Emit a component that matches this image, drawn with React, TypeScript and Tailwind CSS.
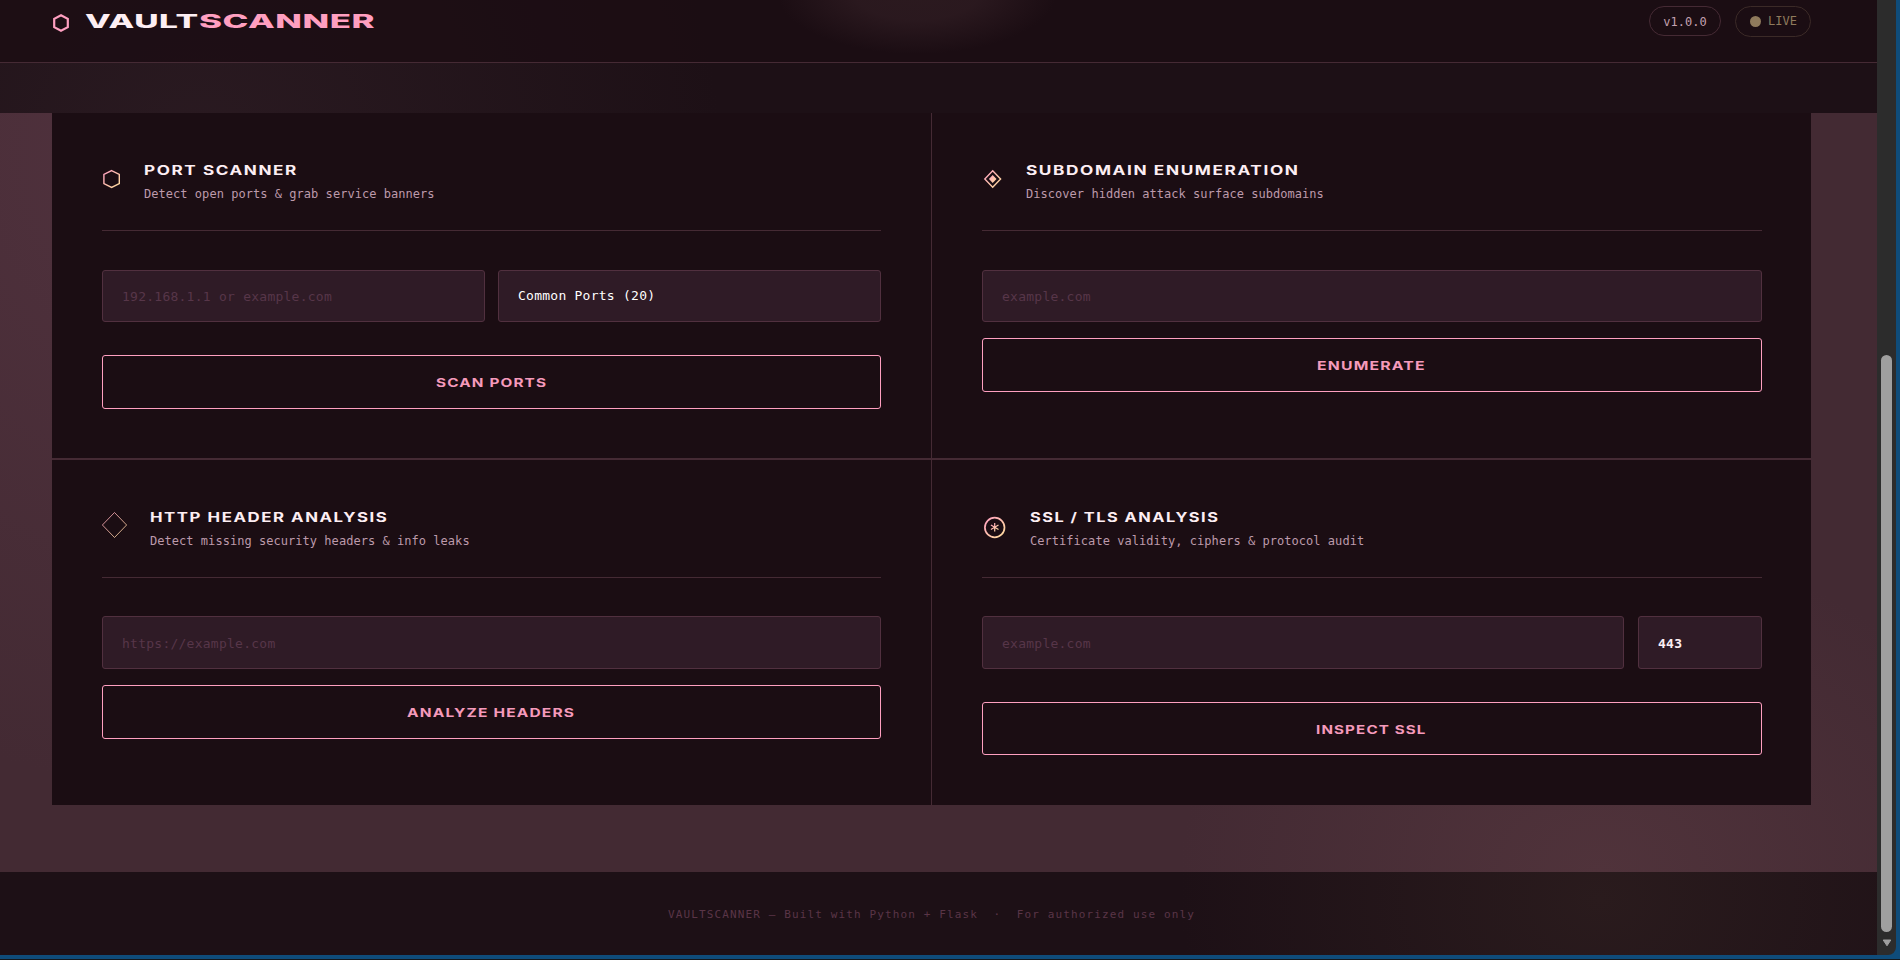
import { useLayoutEffect, useRef, useState } from 'react';

const MONO = "font-['DejaVu_Sans_Mono',monospace]";

// Wide display lettering: the glyphs are stretched until the line is `width` long
function Wide({ width, className = '', children }: { width: number; className?: string; children: React.ReactNode }) {
  const ref = useRef<HTMLSpanElement>(null);
  const [scale, setScale] = useState(1);

  useLayoutEffect(() => {
    if (ref.current) setScale(width / ref.current.offsetWidth);
  }, [width]);

  return (
    <span className="block text-left" style={{ width }}>
      <span
        ref={ref}
        className={`inline-block origin-left whitespace-nowrap font-['Inter',sans-serif] ${className}`}
        style={{ transform: `scaleX(${scale})` }}
      >
        {children}
      </span>
    </span>
  );
}

function Gradient({ id }: { id: string }) {
  return (
    <defs>
      <linearGradient id={id} x1="0" y1="0" x2="1" y2="1">
        <stop offset="0" stopColor="#ff9fc0" />
        <stop offset="0.9" stopColor="#ffd9a0" />
      </linearGradient>
    </defs>
  );
}

function HexIcon() {
  return (
    <svg width="19" height="20" viewBox="0 0 19 20" fill="none" className="mt-2">
      <Gradient id="hex" />
      <path d="M9.6 1.6 17.3 5.4v9.2L9.6 18.4 1.9 14.6V5.4Z" stroke="url(#hex)" strokeWidth="1.4" />
    </svg>
  );
}

function TargetIcon() {
  return (
    <svg width="20" height="20" viewBox="0 0 20 20" fill="none" className="mt-2">
      <Gradient id="target" />
      <path d="M10.7 1.8 18.6 10l-7.9 8.2L2.8 10Z" stroke="url(#target)" strokeWidth="1.4" />
      <path d="M10.7 6 14.5 10l-3.8 4L6.9 10Z" fill="url(#target)" />
    </svg>
  );
}

function DiamondIcon() {
  return (
    <svg width="26" height="28" viewBox="0 0 26 28" fill="none" className="mt-[3px]">
      <Gradient id="diamond" />
      <path d="M12.5 1.5 24.6 14 12.5 26.5.4 14Z" stroke="url(#diamond)" strokeWidth="1" opacity="0.8" />
    </svg>
  );
}

function AsteriskIcon() {
  return (
    <svg width="26" height="24" viewBox="0 0 26 24" fill="none" className="mt-[7px]">
      <Gradient id="asterisk" />
      <circle cx="12.7" cy="12.5" r="9.8" stroke="url(#asterisk)" strokeWidth="1.7" />
      <path d="M12.7 8v8.4M8.9 10.1l7.6 4.4M16.5 10.1l-7.6 4.4" stroke="url(#asterisk)" strokeWidth="1.2" />
    </svg>
  );
}

interface CardProps {
  icon: React.ReactNode;
  iconBox: string;
  title: string;
  titleWidth: number;
  subtitle: string;
  className: string;
  children: React.ReactNode;
}

function Card({ icon, iconBox, title, titleWidth, subtitle, className, children }: CardProps) {
  return (
    <section className={`flex h-[345px] flex-col bg-[#1b0d13] pt-12 pl-[50px] ${className}`}>
      <div className="flex h-[70px] shrink-0 border-b border-[#452a34]">
        <div className={`shrink-0 ${iconBox}`}>{icon}</div>
        <div className="-mt-1">
          <Wide width={titleWidth} className="text-[13px] leading-[20px] font-bold tracking-[1.2px] text-[#fdeef3]">
            {title}
          </Wide>
          <p className={`mt-1 text-[12px] leading-[18px] tracking-[0.04px] text-[#bd9aab] ${MONO}`}>{subtitle}</p>
        </div>
      </div>
      {children}
    </section>
  );
}

const field = `block w-full rounded-[3px] border border-[#51303f] bg-[#2f1b26] px-[19px] text-[13px] tracking-[0.25px] outline-none placeholder:text-[#573649] ${MONO}`;

function ActionButton({ label, width, className }: { label: string; width: number; className: string }) {
  return (
    <button className={`flex w-full items-center justify-center rounded-[3px] border border-[#ff9fc0] pr-px pb-0.5 ${className}`}>
      <Wide width={width} className="text-[12px] leading-[20px] font-bold tracking-[0.9px] text-[#f59abb]">
        {label}
      </Wide>
    </button>
  );
}

function Header() {
  return (
    <header className="flex h-[63px] justify-between border-b border-[#452a34] bg-[#1b0d13]/80 bg-[radial-gradient(ellipse_140px_62px_at_917px_-8px,#36222799_0%,#34202699_45%,#1b0d1300_100%)] pr-[66px] pl-[52px]">
      <div className="flex">
        <svg width="18" height="20" viewBox="0 0 18 20" fill="none" className="mt-[13px] mr-[15px]">
          <path d="M9 2.2 15.8 5.9v8.2L9 17.8 2.2 14.1V5.9Z" stroke="#ff9fc0" strokeWidth="2.2" />
        </svg>
        <div className="mt-[7px] flex">
          <Wide width={114} className="text-[18.5px] leading-[29px] font-extrabold tracking-[0.3px] text-[#fdeef3]">VAULT</Wide>
          <Wide width={177} className="text-[18.5px] leading-[29px] font-extrabold tracking-[0.3px] text-[#ff9fc0]">SCANNER</Wide>
        </div>
      </div>
      <div className={`mt-1.5 flex items-start gap-3.5 text-[12px] ${MONO}`}>
        <span className="flex h-[30px] w-[72px] items-center justify-center rounded-full border border-[#452a34] pt-0.5 text-[#c3a0b0]">
          v1.0.0
        </span>
        <span className="flex h-[31px] w-[76px] items-center gap-[7px] rounded-full border border-[#3b2a27] pb-px pl-3.5 text-[#8f7a5c]">
          <span className="size-[11px] rounded-full bg-[#8f7a5c]" />
          LIVE
        </span>
      </div>
    </header>
  );
}

function Scrollbar() {
  return (
    <div className="flex w-[19px] shrink-0 flex-col items-center rounded-br-lg bg-[#2c2c2c]">
      <div className="mt-[355px] h-[577px] w-[11px] rounded-full bg-[#9f9f9f]" />
      <svg width="10" height="8" viewBox="0 0 10 8" className="mt-[7px]">
        <path d="M1.2 1h7.6L5 6.8Z" fill="#9f9f9f" stroke="#9f9f9f" strokeLinejoin="round" />
      </svg>
    </div>
  );
}

export default function App() {
  return (
    <div className="h-[960px] w-[1900px] overflow-hidden border-b border-[#14181c] bg-[#0f4c7a]">
      <div className="flex h-[955px] w-[1896px]">
        <div className="w-[1877px] bg-[#1d1016] bg-[radial-gradient(ellipse_520px_520px_at_200px_150px,#2a1a21_0%,#1d101600_100%),radial-gradient(ellipse_420px_330px_at_1600px_900px,#2a1b1d_0%,#1d101600_100%)]">
          <Header />
          <main className="mt-[50px] h-[759px] bg-[#432a33] bg-[radial-gradient(ellipse_620px_640px_at_200px_40px,#51323e_0%,#432a3300_100%),radial-gradient(ellipse_420px_330px_at_1600px_760px,#50333b_0%,#432a3300_100%)] pr-[66px] pl-[52px]">
            <div className="grid grid-cols-[879px_879px] gap-x-px gap-y-0.5 bg-[#452a34]">
              <Card className="pr-[50px]" icon={<HexIcon />} iconBox="w-[42px]" title="PORT SCANNER" titleWidth={154} subtitle="Detect open ports & grab service banners">
                <div className="mt-[39px] grid grid-cols-2 gap-[13px]">
                  <input className={`h-[52px] ${field}`} placeholder="192.168.1.1 or example.com" />
                  <select className={`h-[52px] appearance-none text-white ${field}`}>
                    <option>Common Ports (20)</option>
                  </select>
                </div>
                <ActionButton label="SCAN PORTS" width={111} className="mt-[33px] h-[54px]" />
              </Card>

              <Card className="pr-[49px]" icon={<TargetIcon />} iconBox="w-11" title="SUBDOMAIN ENUMERATION" titleWidth={273} subtitle="Discover hidden attack surface subdomains">
                <input className={`mt-[39px] h-[52px] ${field}`} placeholder="example.com" />
                <ActionButton label="ENUMERATE" width={109} className="mt-4 h-[54px]" />
              </Card>

              <Card className="pr-[50px]" icon={<DiamondIcon />} iconBox="w-12" title="HTTP HEADER ANALYSIS" titleWidth={239} subtitle="Detect missing security headers & info leaks">
                <input className={`mt-[38px] h-[53px] pt-0.5 ${field}`} placeholder="https://example.com" />
                <ActionButton label="ANALYZE HEADERS" width={168} className="mt-4 h-[54px]" />
              </Card>

              <Card className="pr-[49px]" icon={<AsteriskIcon />} iconBox="w-12" title="SSL / TLS ANALYSIS" titleWidth={190} subtitle="Certificate validity, ciphers & protocol audit">
                <div className="mt-[38px] flex gap-3.5">
                  <input className={`h-[53px] pt-0.5 ${field}`} placeholder="example.com" />
                  <div className="w-[124px] shrink-0">
                    <input className={`h-[53px] pt-0.5 font-bold text-[#fdeef3] ${field}`} defaultValue="443" />
                  </div>
                </div>
                <ActionButton label="INSPECT SSL" width={111} className="mt-[33px] h-[53px]" />
              </Card>
            </div>
          </main>
          <footer className={`flex h-[83px] items-center justify-center pt-1 pr-3.5 text-[11px] tracking-[1.13px] whitespace-pre text-[#5a3547] ${MONO}`}>
            VAULTSCANNER — Built with Python + Flask{'  ·  '}For authorized use only
          </footer>
        </div>
        <Scrollbar />
      </div>
    </div>
  );
}
